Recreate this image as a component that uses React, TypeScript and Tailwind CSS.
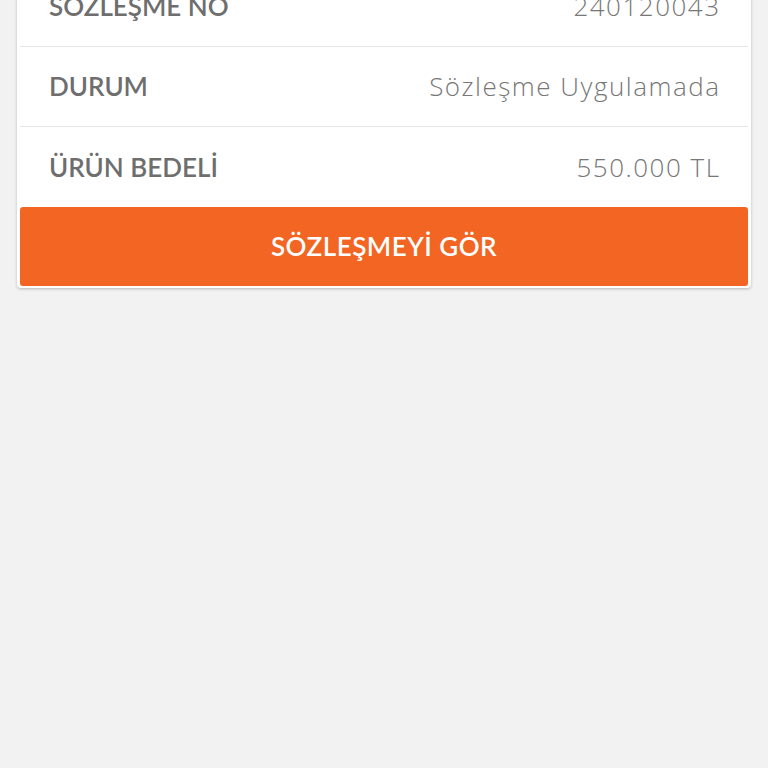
import React from "react";

const rows = [
  { label: "SÖZLEŞME NO", value: "240120043" },
  { label: "DURUM", value: "Sözleşme Uygulamada" },
  { label: "ÜRÜN BEDELİ", value: "550.000 TL" },
];

const App = () => {
  return (
    <div
      className="min-h-[768px] bg-[#f2f2f2] overflow-hidden"
      style={{ fontFamily: "Lato, 'Noto Sans', sans-serif" }}
    >
      <div className="mx-[17px] -mt-[33px] bg-white rounded-b-[4px] shadow-[0_1px_3px_rgba(0,0,0,0.25)] px-[3px] pb-[2px]">
        {/* Info rows */}
        {rows.map((row, i) => (
          <div
            key={row.label}
            className={`h-[80px] flex items-center justify-between pl-[29px] pr-[29px] ${
              i < rows.length - 1 ? "border-b border-[#e6e6e6]" : ""
            }`}
          >
            <span className="text-[26px] font-semibold text-[#6e6e6e]">
              {row.label}
            </span>
            <span className="text-[26px] font-light text-[#777777] font-['Open_Sans',sans-serif] tracking-[1.5px] -mr-[1.5px]">
              {row.value}
            </span>
          </div>
        ))}

        {/* Button */}
        <button className="w-full h-[79px] bg-[#f26522] rounded-[3px] text-white text-[26px] tracking-[0.5px] font-semibold flex items-center justify-center">
          SÖZLEŞMEYİ GÖR
        </button>
      </div>
    </div>
  );
};

export default App;
